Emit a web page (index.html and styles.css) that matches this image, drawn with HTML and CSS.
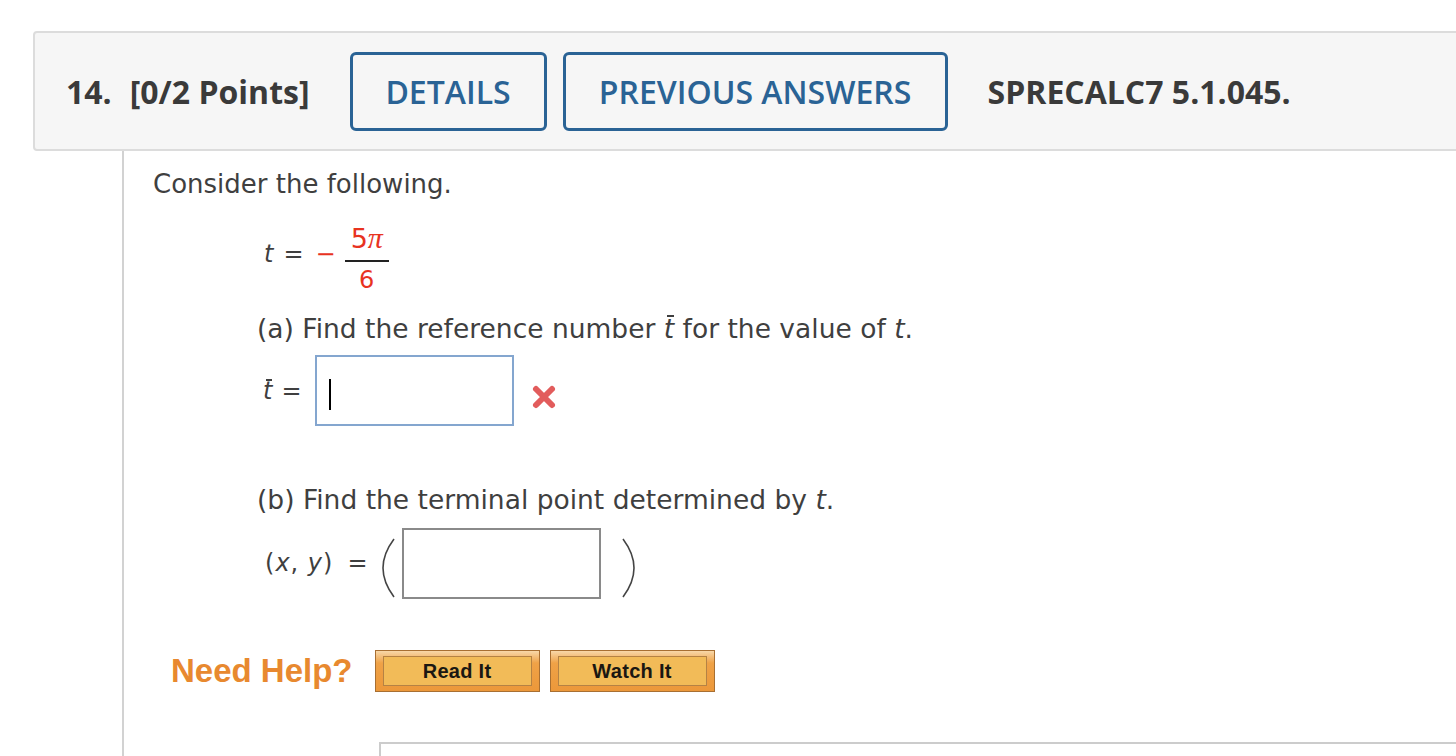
FILE: index.html
```html
<!DOCTYPE html>
<html>
<head>
<meta charset="utf-8">
<link rel="stylesheet" href="styles.css">
</head>
<body>
<div class="page">
  <div class="qheader">
    <span class="qnum">14.</span>
    <span class="qpts">[0/2 Points]</span>
    <span class="hbtn btn-details">DETAILS</span>
    <span class="hbtn btn-prev">PREVIOUS ANSWERS</span>
    <span class="qcode">SPRECALC7 5.1.045.</span>
  </div>
  <div class="qbody">
    <p class="intro">Consider the following.</p>
    <div class="given">
      <span class="mi">t</span><span class="eq">=</span><span class="neg">−</span>
      <span class="frac"><span class="num">5<span class="pi">π</span></span><span class="den">6</span></span>
    </div>
    <p class="part part-a">(a) Find the reference number <span class="mi tbar">t</span> for the value of <span class="mi">t</span>.</p>
    <div class="answer-row row-a">
      <span class="mi tbar lbl-t">t</span><span class="eq-s">=</span>
      <span class="inbox inbox-a"><span class="caret"></span></span>
      <svg class="xmark" width="26" height="26" viewBox="0 0 26 26"><path d="M5 5 L21 21 M21 5 L5 21" stroke="#e25c5c" stroke-width="6" stroke-linecap="round"/></svg>
    </div>
    <p class="part part-b">(b) Find the terminal point determined by <span class="mi">t</span>.</p>
    <div class="answer-row row-b">
      <span class="xy">(<span class="mi">x</span>, <span class="mi">y</span>)</span><span class="eq-s eq-b">=</span>
      <svg class="paren" width="16" height="62" viewBox="0 0 16 62"><path d="M13 2 C4 14 2 24 2 31 C2 38 4 48 13 60" fill="none" stroke="#444" stroke-width="1.6"/></svg>
      <span class="inbox inbox-b"></span>
      <svg class="paren rparen" width="16" height="62" viewBox="0 0 16 62"><path d="M3 2 C12 14 14 24 14 31 C14 38 12 48 3 60" fill="none" stroke="#444" stroke-width="1.6"/></svg>
    </div>
    <div class="help">
      <span class="need">Need Help?</span>
      <span class="hlp"><span class="hlp-in">Read It</span></span>
      <span class="hlp"><span class="hlp-in">Watch It</span></span>
    </div>
    <div class="next-box"></div>
  </div>
</div>
</body>
</html>
```

FILE: styles.css
```css
html, body {
  margin: 0;
  padding: 0;
  background: #ffffff;
  overflow: hidden;
}
.page {
  width: 1456px;
  height: 756px;
  overflow: hidden;
  padding-top: 31px;
  box-sizing: border-box;
}
.qheader {
  margin-left: 33px;
  width: 1500px;
  height: 120px;
  box-sizing: border-box;
  border: 2px solid #dcdcdc;
  border-radius: 4px;
  background: #f6f6f6;
  display: flex;
  align-items: center;
  padding-left: 31px;
  font-family: "Open Sans", sans-serif;
  color: #3a3a3a;
}
.qnum {
  font-weight: 700;
  font-size: 32px;
}
.qpts {
  font-weight: 700;
  font-size: 32px;
  margin-left: 18px;
}
.hbtn {
  display: flex;
  align-items: center;
  justify-content: center;
  height: 79px;
  box-sizing: border-box;
  border: 3px solid #2a6395;
  border-radius: 6px;
  color: #2a6395;
  font-weight: 600;
  font-size: 32px;
}
.btn-details {
  margin-left: 40px;
  width: 197px;
}
.btn-prev {
  margin-left: 16px;
  width: 385px;
}
.qcode {
  margin-left: 40px;
  font-weight: 700;
  font-size: 32px;
}
.qbody {
  margin-left: 122px;
  border-left: 2px solid #d2d2d2;
  height: 620px;
  padding-left: 29px;
  font-family: "DejaVu Sans", Verdana, sans-serif;
  color: #3f3f3f;
  font-size: 24px;
  position: relative;
}
.intro {
  margin: 0;
  padding-top: 18px;
  font-size: 26px;
  line-height: 30px;
}
.mi {
  font-style: italic;
}
.given {
  display: flex;
  align-items: center;
  margin-left: 111px;
  margin-top: 15px;
  height: 80px;
  font-size: 24px;
}
.given .eq {
  margin-left: 10px;
}
.neg {
  color: #e8331f;
  margin-left: 12px;
}
.frac {
  display: inline-flex;
  flex-direction: column;
  align-items: center;
  margin-left: 9px;
  margin-top: 9px;
  color: #e8331f;
}
.frac .num {
  padding: 0 6px 6px;
  border-bottom: 2px solid #222;
  line-height: 30px;
  font-size: 27px;
}
.frac .den {
  line-height: 30px;
  padding-top: 3px;
  font-size: 24px;
}
.pi {
  font-family: "Liberation Serif", serif;
  font-style: italic;
  font-size: 30px;
}
.part {
  margin: 0;
  margin-left: 104px;
  font-size: 26.5px;
  line-height: 30px;
}
.part-a {
  margin-top: 20px;
}
.tbar {
  position: relative;
}
.tbar::before {
  content: "";
  position: absolute;
  left: 3px;
  right: 0;
  top: 2px;
  height: 2px;
  background: currentColor;
}
.answer-row {
  display: flex;
  align-items: center;
  margin-left: 108px;
  font-size: 24px;
}
.row-a {
  margin-top: 11px;
}
.lbl-t {
  margin-left: 2px;
}
.eq-s {
  margin-left: 9px;
}
.inbox {
  display: block;
  box-sizing: border-box;
  width: 199px;
  height: 71px;
}
.inbox-a {
  margin-left: 13px;
  border: 2px solid #84a6cf;
  position: relative;
}
.caret {
  position: absolute;
  left: 12px;
  top: 22px;
  width: 2px;
  height: 31px;
  background: #000;
}
.xmark {
  margin-left: 17px;
  margin-top: 13px;
}
.part-b {
  margin-top: 59px;
}
.row-b {
  margin-top: 12px;
  margin-left: 112px;
}
.xy {
  letter-spacing: 1px;
}
.eq-b {
  margin-left: 14px;
}
.paren {
  margin-left: 13px;
  margin-top: 10px;
}
.inbox-b {
  margin-left: 5px;
  border: 2px solid #8a8a8a;
}
.rparen {
  margin-left: 19px;
}
.help {
  display: flex;
  align-items: center;
  margin-top: 51px;
  margin-left: 18px;
}
.need {
  font-family: "Liberation Sans", Arial, sans-serif;
  font-weight: 700;
  font-size: 33px;
  color: #e8892f;
  margin-right: 22px;
}
.hlp {
  display: flex;
  box-sizing: border-box;
  width: 165px;
  height: 42px;
  border: 1px solid #a86f32;
  background: linear-gradient(#f8d7a8 0%, #efa247 30%, #ec983a 100%);
  padding: 5px 7px;
  margin-right: 10px;
}
.hlp-in {
  flex: 1;
  display: flex;
  align-items: center;
  justify-content: center;
  border: 1px solid #b58244;
  background: #f2bb58;
  font-family: "Liberation Sans", Arial, sans-serif;
  font-weight: 700;
  font-size: 20px;
  letter-spacing: 0.3px;
  color: #1a1712;
}
.next-box {
  position: absolute;
  left: 255px;
  top: 591px;
  width: 1200px;
  height: 40px;
  border-top: 2px solid #cccccc;
  border-left: 2px solid #cccccc;
}
```
